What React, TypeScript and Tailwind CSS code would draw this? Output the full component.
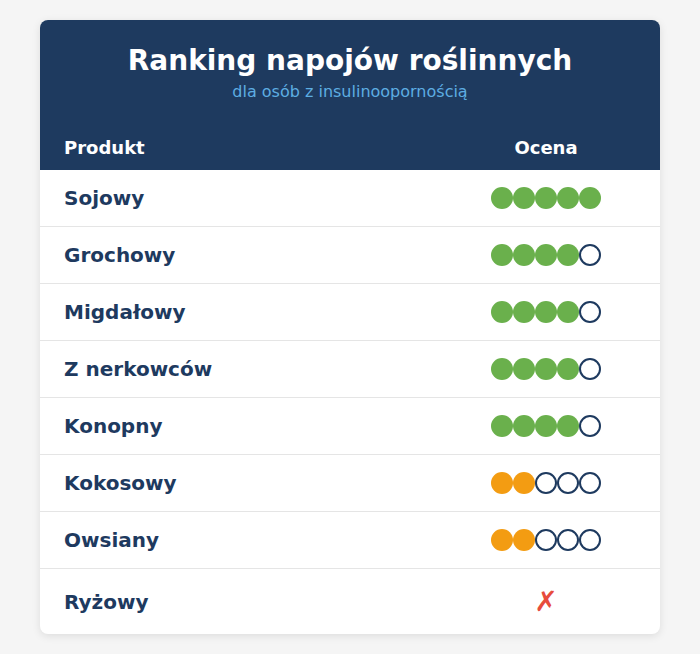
import React from 'react';

type Row = { name: string; score: number | null; color: 'green' | 'orange' };

const rows: Row[] = [
  { name: 'Sojowy', score: 5, color: 'green' },
  { name: 'Grochowy', score: 4, color: 'green' },
  { name: 'Migdałowy', score: 4, color: 'green' },
  { name: 'Z nerkowców', score: 4, color: 'green' },
  { name: 'Konopny', score: 4, color: 'green' },
  { name: 'Kokosowy', score: 2, color: 'orange' },
  { name: 'Owsiany', score: 2, color: 'orange' },
  { name: 'Ryżowy', score: null, color: 'green' },
];

const Dots: React.FC<{ score: number; color: 'green' | 'orange' }> = ({ score, color }) => (
  <div className="flex">
    {[0, 1, 2, 3, 4].map(i =>
      i < score ? (
        <div
          key={i}
          className={`w-[22px] h-[22px] rounded-full ${color === 'green' ? 'bg-[#6ab04c]' : 'bg-[#f39c12]'}`}
        />
      ) : (
        <div key={i} className="w-[22px] h-[22px] rounded-full border-2 border-[#1e3a5f] bg-white" />
      )
    )}
  </div>
);

export default function App() {
  return (
    <div className="min-h-[654px] bg-[#f5f5f5] pt-[20px] font-['DejaVu_Sans',sans-serif]">
      <div className="mx-auto w-[620px] bg-white rounded-lg overflow-hidden shadow-[0_2px_8px_rgba(0,0,0,0.1)]">
        <div className="bg-[#1e3a5f] text-white">
          <div className="pt-[24px] pb-[24px] text-center">
            <h1 className="text-[28px] leading-[34px] font-bold">Ranking napojów roślinnych</h1>
            <p className="mt-[4px] text-[16px] leading-[19px] text-[#5dade2]">dla osób z insulinoopornością</p>
          </div>
          <div className="flex h-[45px] items-center px-[24px] text-[18px] font-bold">
            <div className="flex-1">Produkt</div>
            <div className="w-[180px] text-center">Ocena</div>
          </div>
        </div>
        {rows.map((r, idx) => (
          <div
            key={r.name}
            className={`flex items-center px-[24px] ${idx < rows.length - 1 ? 'h-[57px] border-b border-[#e5e5e5]' : 'h-[65px]'}`}
          >
            <div className="flex-1 text-[20px] font-bold text-[#1e3a5f]">{r.name}</div>
            <div className="w-[180px] flex justify-center">
              {r.score === null ? (
                <span className="text-[28px] leading-none text-[#e74c3c]">✗</span>
              ) : (
                <Dots score={r.score} color={r.color} />
              )}
            </div>
          </div>
        ))}
      </div>
    </div>
  );
}
